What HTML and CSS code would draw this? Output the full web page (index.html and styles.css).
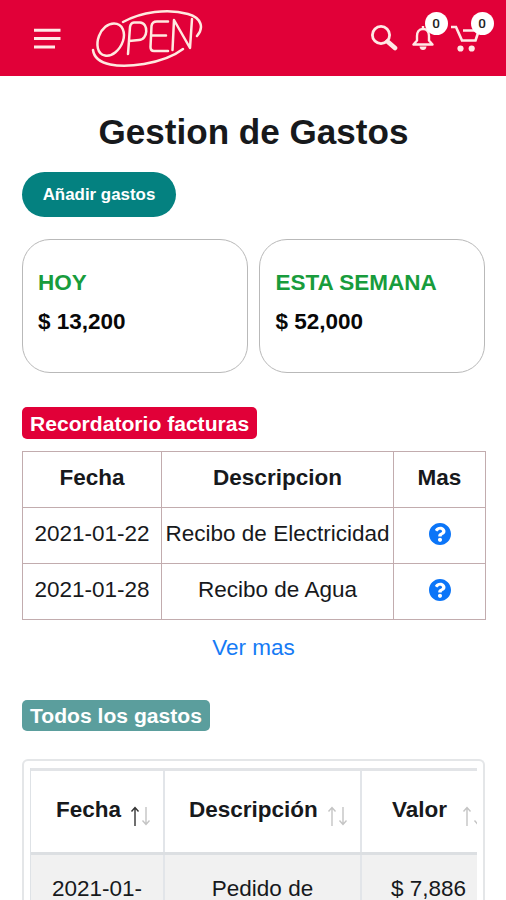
FILE: index.html
```html
<!DOCTYPE html>
<html lang="es">
<head>
<meta charset="utf-8">
<title>Gestion de Gastos</title>
<link rel="stylesheet" href="styles.css">
</head>
<body>
<header class="topbar">
  <svg class="menu" width="27" height="22" viewBox="0 0 27 22" fill="none" stroke="#ffe9e6" stroke-width="3"><path d="M0 2.2h26.500M0 10.500h26.500M0 19h21"/></svg>
  <svg class="logo" width="112" height="60" viewBox="0 0 112 60" fill="none" stroke="#ffe9e0" stroke-width="2.5" stroke-linecap="round" stroke-linejoin="round">
    <path d="M32 13C50 3 77-1 97 5C111 9 113 19 106 27"/>
    <path d="M2 41C4 57 29 59 53 55C70 52 83 47 92 40"/>
    <path d="M23 14.500C32 14.500 34.500 24 32 32C29 41 21 48 14 46.500C6 45 5 35 8 27C11 19 17 14.500 23 14.500Z"/>
    <path d="M37 45L39 18Q39.500 14 43 13.500H49C58 14 57 31 48 31L38 32"/>
    <path d="M77 12.500H66Q61 12.500 60.500 17L59.500 38Q59.500 42 63 42H77M61 26.500H75"/>
    <path d="M81.500 41L83 11L99 39L101 10"/>
  </svg>
  <div class="actions">
    <svg class="search" width="28" height="28" viewBox="0 0 28 28" fill="none" stroke="#ffe9e6"><circle cx="11" cy="11" r="8.600" stroke-width="2.800"/><path d="M17.500 17.500L25 24" stroke-width="4.600" stroke-linecap="round"/></svg>
    <div class="action bell">
      <svg width="22" height="26" viewBox="0 0 22 26" fill="none" stroke="#ffe9e6" stroke-width="2.400"><path d="M11 4C6.500 4 5 7.500 5 11v4.500L1.500 19.500h19L17 15.500V11C17 7.500 15.500 4 11 4Z" stroke-linejoin="round"/><path d="M11 1v3"/><path d="M7.500 21.500h7Q14 25 11 25T7.500 21.500Z" fill="#ffe9e6" stroke="none"/></svg>
      <span class="count">0</span>
    </div>
    <div class="action cart">
      <svg width="30" height="28" viewBox="0 0 30 28" fill="none" stroke="#ffe9e6" stroke-width="2.600"><path d="M0 2h5L11 15.500H24.500L28 5M12 5.500h15"/><g fill="#ffe9e6" stroke="none"><circle cx="9.500" cy="23.500" r="3.100"/><circle cx="20.700" cy="23.500" r="3.100"/></g></svg>
      <span class="count">0</span>
    </div>
  </div>
</header>
<main class="page">
  <h1 class="title">Gestion de Gastos</h1>
  <button class="add">Añadir gastos</button>
  <section class="cards">
    <div class="card"><h2 class="card-title">HOY</h2><p class="amount">$ 13,200</p></div>
    <div class="card"><h2 class="card-title">ESTA SEMANA</h2><p class="amount">$ 52,000</p></div>
  </section>
  <h3 class="tag tag-red">Recordatorio facturas</h3>
  <table class="bills">
    <colgroup><col class="c-date"><col class="c-desc"><col class="c-more"></colgroup>
    <tr><th>Fecha</th><th>Descripcion</th><th>Mas</th></tr>
    <tr><td>2021-01-22</td><td>Recibo de Electricidad</td><td><svg class="help" width="22" height="22" viewBox="8 8 496 496"><path fill="#0b75f8" d="M504 256c0 136.997-111.043 248-248 248S8 392.997 8 256C8 119.083 119.043 8 256 8s248 111.083 248 248zM262.655 90c-54.497 0-89.255 22.957-116.549 63.758-3.536 5.286-2.353 12.415 2.715 16.258l34.699 26.310c5.205 3.947 12.621 3.008 16.665-2.122 17.864-22.658 30.113-35.797 57.303-35.797 20.429 0 45.698 13.148 45.698 32.958 0 14.976-12.363 22.667-32.534 33.976C247.128 238.528 216 254.941 216 296v4c0 6.627 5.373 12 12 12h56c6.627 0 12-5.373 12-12v-1.333c0-28.462 83.186-29.647 83.186-106.667 0-58.002-60.165-102-116.531-102zM256 338c-25.365 0-46 20.635-46 46 0 25.364 20.635 46 46 46s46-20.636 46-46c0-25.365-20.635-46-46-46z"/></svg></td></tr>
    <tr><td>2021-01-28</td><td>Recibo de Agua</td><td><svg class="help" width="22" height="22" viewBox="8 8 496 496"><path fill="#0b75f8" d="M504 256c0 136.997-111.043 248-248 248S8 392.997 8 256C8 119.083 119.043 8 256 8s248 111.083 248 248zM262.655 90c-54.497 0-89.255 22.957-116.549 63.758-3.536 5.286-2.353 12.415 2.715 16.258l34.699 26.310c5.205 3.947 12.621 3.008 16.665-2.122 17.864-22.658 30.113-35.797 57.303-35.797 20.429 0 45.698 13.148 45.698 32.958 0 14.976-12.363 22.667-32.534 33.976C247.128 238.528 216 254.941 216 296v4c0 6.627 5.373 12 12 12h56c6.627 0 12-5.373 12-12v-1.333c0-28.462 83.186-29.647 83.186-106.667 0-58.002-60.165-102-116.531-102zM256 338c-25.365 0-46 20.635-46 46 0 25.364 20.635 46 46 46s46-20.636 46-46c0-25.365-20.635-46-46-46z"/></svg></td></tr>
  </table>
  <a class="more">Ver mas</a>
  <h3 class="tag tag-teal">Todos los gastos</h3>
  <section class="panel">
    <div class="scroller">
      <div class="grid head">
        <div class="cell">Fecha<svg class="sort" width="20" height="21" viewBox="0 0 20 21" fill="none" stroke-width="1.400"><path stroke="#333" d="M5 20V2M1.500 5.500L5 1.500L8.500 5.500"/><path stroke="#c4c4c4" d="M16 1V18M12.500 14.500L16 18.500L19.500 14.500"/></svg></div>
        <div class="cell">Descripción<svg class="sort" width="20" height="21" viewBox="0 0 20 21" fill="none" stroke="#c4c4c4" stroke-width="1.400"><path d="M5 20V2M1.500 5.500L5 1.500L8.500 5.500M16 1V18M12.500 14.500L16 18.500L19.500 14.500"/></svg></div>
        <div class="cell">Valor<svg class="sort sort-wide" width="20" height="21" viewBox="0 0 20 21" fill="none" stroke="#c4c4c4" stroke-width="1.400"><path d="M5 20V2M1.500 5.500L5 1.500L8.500 5.500M16 1V18M12.500 14.500L16 18.500L19.500 14.500"/></svg></div>
      </div>
      <div class="grid row">
        <div class="cell">2021-01-</div>
        <div class="cell">Pedido de</div>
        <div class="cell">$ 7,886</div>
      </div>
    </div>
  </section>
</main>
</body>
</html>
```
FILE: styles.css
```css
* { box-sizing: border-box; }
body {
  margin: 0;
  background: #fff;
  color: #17191c;
  font: 22.5px/34px "Liberation Sans", Arial, sans-serif;
}
h1, h2, h3, p { margin: 0; }

.topbar {
  display: flex;
  height: 76px;
  padding-left: 34px;
  background: #e10038;
}
.menu { margin-top: 28px; }
.logo { margin: 9px 0 0 30px; }
.actions { display: flex; margin-left: 167px; }
.search { margin-top: 24px; }
.action { position: relative; }
.action svg { display: block; }
.bell { margin: 25px 0 0 14px; }
.cart { margin: 25px 0 0 17px; }
.count {
  position: absolute;
  top: -13px;
  width: 23px;
  height: 23px;
  border-radius: 50%;
  background: #fff;
  color: #222;
  font: 500 13.500px/23px Roboto, sans-serif;
  text-align: center;
}
.bell .count { left: 12.500px; }
.cart .count { left: 19.500px; }

.page {
  display: flow-root;
  height: 824px;
  padding: 35px 21px 0 22px;
  overflow: hidden;
}
.title {
  font-size: 35.100px;
  line-height: 42px;
  text-align: center;
}
.add {
  display: block;
  width: 154px;
  height: 45px;
  margin-top: 19px;
  padding: 0;
  border: 0;
  border-radius: 23px;
  background: #048180;
  color: #fff;
  font: bold 16.900px/45px "Liberation Sans", Arial, sans-serif;
}
.cards { display: flex; gap: 11px; margin-top: 22px; }
.card {
  flex: 1;
  height: 134px;
  padding: 25px 15px;
  border: 1px solid #b9b9b9;
  border-radius: 28px;
}
.card + .card { padding-left: 16px; }
.card-title {
  color: #189c3c;
  font-size: 22.500px;
  line-height: 36px;
}
.amount {
  margin-top: 4px;
  color: #080808;
  font-weight: bold;
  line-height: 34px;
}
.tag {
  width: max-content;
  padding: 0 8px;
  border-radius: 5px;
  color: #fff;
  font-size: 21.100px;
}
.tag-red {
  height: 32px;
  margin-top: 34px;
  background: #e10038;
  line-height: 33px;
}
.bills {
  width: 463px;
  margin-top: 12px;
  border-collapse: collapse;
  table-layout: fixed;
  text-align: center;
}
.c-date { width: 139px; }
.c-desc { width: 232px; }
.c-more { width: 92px; }
.bills tr { height: 56px; }
.bills th, .bills td {
  padding: 0 0 3px;
  border: 1px solid #c2acae;
  white-space: nowrap;
}
.help { display: block; margin: 0 auto; }
.more {
  display: block;
  margin-top: 11px;
  color: #167bf5;
  text-align: center;
}
.tag-teal {
  height: 31px;
  margin-top: 35px;
  background: #5b9e9d;
  line-height: 32px;
}
.panel {
  height: 141px;
  margin-top: 28px;
  padding: 7px 6px 0;
  border: 2px solid #e4e6e8;
  border-bottom: 0;
  border-radius: 6px 6px 0 0;
}
.scroller { overflow: hidden; border-left: 1px solid #dee2e6; }
.grid { display: grid; grid-template-columns: 134px 197px 140px; }
.cell { display: flex; white-space: nowrap; border-right: 2px solid #e2e5e9; }
.head { height: 87px; border-top: 3px solid #e2e4e7; border-bottom: 3px solid #dcdfe2; font-weight: bold; }
.head .cell { padding: 22px 0 0 25px; }
.head .cell:nth-child(2) { padding-left: 24px; }
.head .cell:last-child { padding-left: 30px; }
.sort { margin: 13px 0 0 9px; }
.sort-wide { margin-left: 15px; }
.row { height: 47px; background: #f1f1f1; }
.row .cell { justify-content: center; padding-top: 17px; }
.row .cell:last-child { padding-right: 5px; }
```
